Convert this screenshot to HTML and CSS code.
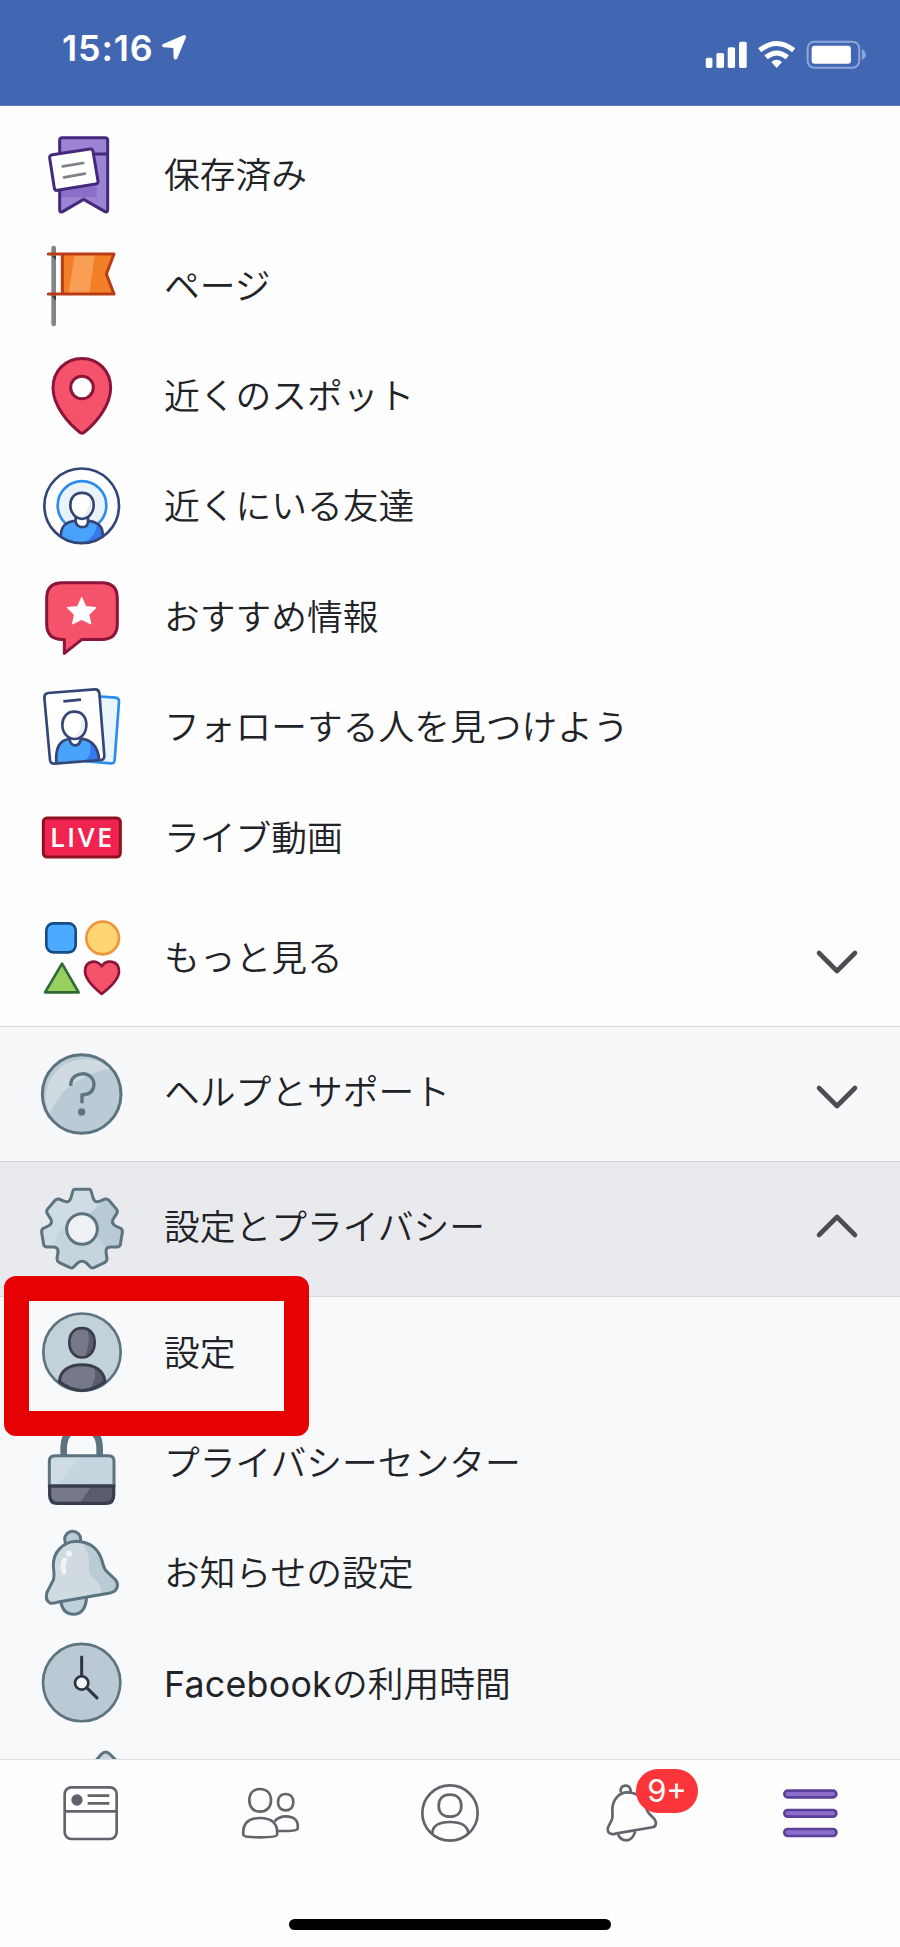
FILE: index.html
```html
<!DOCTYPE html>
<html lang="ja">
<head>
<meta charset="utf-8">
<title>メニュー</title>
<link rel="stylesheet" href="styles.css">
</head>
<body>
<div class="screen">
  <header class="status">
    <span class="time">15:16</span>
    <svg class="arrow" viewBox="480 100 84 84"><path d="M488 134 L552 106 Q559 105 558 113 L532 176 Q526 184 521 175 L520 145 L491 143 Q483 139 488 134Z" fill="#fff"/></svg>
    <svg class="signals" viewBox="192 115 492 100">
      <g fill="#fff">
        <rect x="197" y="174" width="20" height="31" rx="5"/><rect x="229" y="160" width="23" height="45" rx="5"/><rect x="263" y="143" width="22" height="62" rx="5"/><rect x="297" y="126" width="23" height="79" rx="5"/>
        <path d="M394 187 Q410 174 426 187 L410 205Z"/>
      </g>
      <g fill="none" stroke="#fff" stroke-width="15"><path d="M359 152 Q410 111 461 152"/><path d="M378 173 Q410 147 442 173"/></g>
      <rect x="503" y="126" width="155" height="78" rx="20" fill="none" stroke="#8ea6dc" stroke-width="6"/>
      <rect x="515" y="138" width="118" height="54" rx="9" fill="#fff"/>
      <path d="M666 148 Q678 156 678 165 T666 181Z" fill="#8ea6dc"/>
    </svg>
  </header>

  <main class="content">
    <ul class="list">
      <li class="row">
        <svg class="icon" viewBox="18 27 276 276">
          <path d="M89 60 Q89 53 97 53 H225 Q233 53 233 60 V270 Q233 278 225 275 L161 238 L98 275 Q89 279 89 270Z" fill="#9c83d4"/>
          <path d="M91 214 L200 198 V232 H91Z" fill="#8a6fc8"/>
          <path d="M190 102 H233 M89 60 Q89 53 97 53 H225 Q233 53 233 60 V270 Q233 278 225 275 L161 238 L98 275 Q89 279 89 270Z" fill="none" stroke="#44297d" stroke-width="9" stroke-linejoin="round"/>
          <path d="M67 104 L180 87 Q188 86 189 94 L204 183 Q205 191 197 192 L82 211 Q74 212 73 204 L59 114 Q58 106 67 104Z" fill="#fff" stroke="#44297d" stroke-width="9"/>
          <path d="M98 139 L160 129 M102 172 L165 161" stroke="#7d8288" stroke-width="8" stroke-linecap="round"/>
        </svg>
        <span class="label">保存済み</span>
      </li>
      <li class="row">
        <svg class="icon" viewBox="18 358 276 276">
          <path d="M71 382 V610" stroke="#7f868c" stroke-width="14" stroke-linecap="round"/>
          <path d="M64 405 H78 V418Z M64 525 H78 V540Z" fill="#3c4043"/>
          <path d="M97 400 H254 L229 460 L254 520 H97Z" fill="#f47f29"/>
          <path d="M134 402 H194 L178 519 H115Z" fill="#f99f55"/>
          <path d="M97 400 V520 M55 400 H252 L229 460 L252 520 H55" fill="none" stroke="#b93a17" stroke-width="9" stroke-linecap="round" stroke-linejoin="round"/>
        </svg>
        <span class="label">ページ</span>
      </li>
      <li class="row">
        <svg class="icon" viewBox="18 689.5 276 276">
          <path d="M156 715 C106 715 69 753 69 803 C69 858 116 910 150 937 Q156 941 162 937 C196 910 242 858 242 803 C242 753 205 715 156 715Z" fill="#f5526c" stroke="#8a1538" stroke-width="9"/>
          <circle cx="156" cy="802" r="34" fill="#fff" stroke="#8a1538" stroke-width="9"/>
        </svg>
        <span class="label">近くのスポット</span>
      </li>
      <li class="row">
        <svg class="icon" viewBox="18 30.6 276 276">
          <circle cx="155" cy="168" r="112" fill="#fff"/>
          <circle cx="156" cy="167" r="73" fill="#ebf3fa" stroke="#2d8ded" stroke-width="8"/>
          <path d="M93 260 C92 230 108 214 138 213 V205 H174 V213 C204 215 220 232 218 260 Q156 300 93 260Z" fill="#4aa3fa"/>
          <path d="M202 220 Q220 232 218 258 Q190 280 160 279 Q198 262 202 220Z" fill="#3679ee"/>
          <path d="M137 200 V216 Q140 231 156 232 T174 216 V200Z" fill="#fff" stroke="#344678" stroke-width="8"/>
          <path d="M93 258 C92 230 108 214 138 213 M174 213 C204 215 220 232 218 258" fill="none" stroke="#344678" stroke-width="8"/>
          <path d="M156 129 C179 129 191 145 191 166 C191 190 175 207 156 207 S121 190 121 166 C121 145 133 129 156 129Z" fill="#fff" stroke="#344678" stroke-width="8"/>
          <path d="M178 142 Q190 160 181 182 Q172 200 156 202 Q180 180 178 142Z" fill="#e9edf1"/>
          <circle cx="155" cy="168" r="112" fill="none" stroke="#344678" stroke-width="8"/>
        </svg>
        <span class="label">近くにいる友達</span>
      </li>
      <li class="row">
        <svg class="icon" viewBox="18 361.8 276 276">
          <path d="M97 397 H215 Q262 397 262 444 V520 Q262 567 215 567 H156 L103 609 V567 H97 Q50 567 50 520 V444 Q50 397 97 397Z" fill="#f5526c" stroke="#8a1538" stroke-width="9" stroke-linejoin="round"/>
          <path d="M155 442 L167 469 L197 472 L176 492 L182 520 L155 506 L128 520 L134 492 L113 472 L143 469Z" fill="#fff" stroke="#fff" stroke-width="4" stroke-linejoin="round"/>
        </svg>
        <span class="label">おすすめ情報</span>
      </li>
      <li class="row">
        <svg class="icon" viewBox="18 693 276 276">
          <path d="M190 738 L257 743 Q268 744 267 755 L254 930 Q253 941 242 940 L170 934Z" fill="#eaf4fb" stroke="#2d8ded" stroke-width="8"/>
          <path d="M54 729 L194 718 Q206 717 208 729 L223 917 Q223 929 212 930 L73 941 Q61 941 60 930 L43 742 Q43 731 54 729Z" fill="#fff"/>
          <path d="M79 937 C76 896 86 870 119 865 H147 C182 870 204 880 208 929Z" fill="#4aa3fa"/>
          <path d="M180 878 Q203 888 207 929 L165 933 Q187 915 180 878Z" fill="#3679ee"/>
          <path d="M79 937 C76 896 86 870 119 867 M149 866 C182 868 204 885 207 929" fill="none" stroke="#344678" stroke-width="8"/>
          <path d="M119 858 V870 Q123 886 136 886 T152 868 V858Z" fill="#fff" stroke="#344678" stroke-width="8"/>
          <path d="M133 785 C156 785 169 801 169 824 C169 850 153 867 134 867 S97 850 97 824 C97 803 110 785 133 785Z" fill="#fff" stroke="#344678" stroke-width="8"/>
          <path d="M155 799 Q169 819 159 843 Q150 861 134 862 Q158 840 155 799Z" fill="#e9edf1"/>
          <path d="M100 754 L153 749 M54 729 L194 718 Q206 717 208 729 L223 917 Q223 929 212 930 L73 941 Q61 941 60 930 L43 742 Q43 731 54 729Z" fill="none" stroke="#344678" stroke-width="8"/>
        </svg>
        <span class="label">フォローする人を見つけよう</span>
      </li>
      <li class="row">
        <svg class="icon" viewBox="18 4.2 276 276">
          <rect x="40" y="82" width="231" height="117" rx="11" fill="#f0244f" stroke="#8f1220" stroke-width="9"/>
          <text class="live" x="60" y="170" textLength="186" lengthAdjust="spacing">LIVE</text>
        </svg>
        <span class="label">ライブ動画</span>
      </li>
      <li class="row row-more">
        <svg class="icon" viewBox="18 370 276 276">
          <rect x="49" y="401" width="88" height="87" rx="21" fill="#4cabff" stroke="#174d87" stroke-width="8"/>
          <circle cx="218" cy="445" r="49" fill="#ffd573" stroke="#ee973e" stroke-width="8"/>
          <path d="M96 522 L146 608 H45Z" fill="#97cf61" stroke="#2f6b37" stroke-width="8" stroke-linejoin="round"/>
          <path d="M215 613 C195 597 165 572 165 545 C165 511 202 508 215 530 C229 508 267 511 267 545 C267 572 236 597 215 613Z" fill="#f5526c" stroke="#8a1538" stroke-width="8" stroke-linejoin="round"/>
        </svg>
        <span class="label raised">もっと見る</span>
        <svg class="chevron" viewBox="0 0 44 26"><path d="M4 4 L22 22 L40 4"/></svg>
      </li>
    </ul>

    <div class="row group">
      <svg class="icon" viewBox="18 774 276 276">
        <circle cx="155" cy="912" r="118" fill="#bacbd5"/>
        <path d="M58 975 A118 118 0 0 1 242 836 C215 838 190 848 150 868 Q85 905 58 975Z" fill="#cfdae1"/>
        <circle cx="155" cy="912" r="118" fill="none" stroke="#5b747f" stroke-width="9"/>
        <path d="M122 887 C122 840 192 840 192 884 Q190 914 156 915 V940" fill="none" stroke="#5b747f" stroke-width="10"/>
        <circle cx="155" cy="966" r="11" fill="#5b747f"/>
      </svg>
      <span class="label raised">ヘルプとサポート</span>
      <svg class="chevron low" viewBox="0 0 44 26"><path d="M4 4 L22 22 L40 4"/></svg>
    </div>

    <div class="row group open">
      <svg class="icon" viewBox="108 99 276 276">
        <path d="M224 118 H267 Q272 118 274 125 L280 146 Q286 160 300 153 L315 147 Q322 146 328 152 L350 178 Q354 184 350 191 L339 208 Q334 222 347 228 L362 235 Q368 239 367 247 L361 284 Q359 291 351 291 L331 291 Q317 292 318 306 L321 326 Q321 333 315 337 L282 353 Q274 356 270 350 L259 339 Q246 329 233 339 L222 350 Q218 356 210 353 L177 337 Q171 333 171 326 L174 306 Q175 292 161 291 L141 291 Q133 291 131 284 L125 247 Q124 239 130 235 L145 228 Q158 222 153 208 L142 191 Q138 184 142 178 L164 152 Q170 146 177 147 L192 153 Q206 160 212 146 L218 125 Q220 118 224 118Z" fill="#c5d4dd"/>
        <path d="M224 118 H267 L280 148 L300 153 L280 185 Q160 220 165 290 L131 284 L125 240 L155 220 L140 184 L170 147 L208 153Z" fill="#cfdce3"/>
        <path d="M271 190 L315 149 L350 185 L337 216 L366 240 L358 291 L318 294 Q305 270 290 262 Q302 220 271 190Z" fill="#b7cad5"/>
        <path d="M224 118 H267 Q272 118 274 125 L280 146 Q286 160 300 153 L315 147 Q322 146 328 152 L350 178 Q354 184 350 191 L339 208 Q334 222 347 228 L362 235 Q368 239 367 247 L361 284 Q359 291 351 291 L331 291 Q317 292 318 306 L321 326 Q321 333 315 337 L282 353 Q274 356 270 350 L259 339 Q246 329 233 339 L222 350 Q218 356 210 353 L177 337 Q171 333 171 326 L174 306 Q175 292 161 291 L141 291 Q133 291 131 284 L125 247 Q124 239 130 235 L145 228 Q158 222 153 208 L142 191 Q138 184 142 178 L164 152 Q170 146 177 147 L192 153 Q206 160 212 146 L218 125 Q220 118 224 118Z" fill="none" stroke="#5b747f" stroke-width="9"/>
        <circle cx="246" cy="237" r="46" fill="#f0f1f5" stroke="#5b747f" stroke-width="9"/>
      </svg>
      <span class="label raised">設定とプライバシー</span>
      <svg class="chevron up" viewBox="0 0 44 26"><path d="M4 22 L22 4 L40 22"/></svg>
    </div>

    <ul class="list sub">
      <li class="row">
        <svg class="icon" viewBox="108 468.6 276 276">
          <circle cx="246" cy="607" r="116" fill="#c3d1d9" stroke="#5b747f" stroke-width="8"/>
          <path d="M178 698 C180 660 210 645 246 645 S312 660 316 698 Q246 748 178 698Z" fill="#777988"/>
          <path d="M282 652 Q312 665 315 697 Q295 714 265 720 Q295 690 282 652Z" fill="#5a5c6b"/>
          <path d="M178 696 C180 660 210 645 246 645 S312 660 315 696 Q246 748 178 696Z" fill="none" stroke="#373e4d" stroke-width="9"/>
          <path d="M246 535 C270 535 284 552 284 578 C284 605 268 623 246 623 S208 605 208 578 C208 552 222 535 246 535Z" fill="#777988"/>
          <path d="M262 538 Q284 550 284 578 Q282 612 254 622 Q274 575 262 538Z" fill="#5a5c6b"/>
          <path d="M246 535 C270 535 284 552 284 578 C284 605 268 623 246 623 S208 605 208 578 C208 552 222 535 246 535Z" fill="none" stroke="#373e4d" stroke-width="8"/>
        </svg>
        <span class="label">設定</span>
      </li>
      <li class="row">
        <svg class="icon" viewBox="108 -10.2 276 276">
          <path d="M191 108 V85 C191 50 205 25 245 25 S299 50 299 85 V108" fill="none" stroke="#5b747f" stroke-width="20"/>
          <path d="M165 106 H326 Q342 106 342 122 V196 H148 V122 Q148 106 165 106Z" fill="#c5d4dd"/>
          <path d="M150 116 L240 110 L170 196 H150Z" fill="#cfdce3"/>
          <path d="M165 106 H326 Q342 106 342 122 V196 H148 V122 Q148 106 165 106Z" fill="none" stroke="#5b747f" stroke-width="9"/>
          <path d="M149 197 H341 V224 Q341 249 318 249 H172 Q149 249 149 224Z" fill="#5a5c6b"/>
          <path d="M152 200 H273 L240 247 H170 Q152 240 152 220Z" fill="#777988"/>
          <path d="M149 197 H341 V224 Q341 249 318 249 H172 Q149 249 149 224Z" fill="none" stroke="#373e4d" stroke-width="10"/>
        </svg>
        <span class="label">プライバシーセンター</span>
      </li>
      <li class="row">
        <svg class="icon" viewBox="108 321 276 276">
          <circle cx="218" cy="358" r="24" fill="#b9cbd6" stroke="#5b747f" stroke-width="9"/>
          <path d="M182 540 Q186 582 221 583 Q257 582 260 530Z" fill="#bed0da" stroke="#5b747f" stroke-width="9"/>
          <path d="M150 549 Q134 540 141 517 L160 480 Q164 470 160 440 C158 395 190 366 228 364 C265 365 295 382 307 425 Q312 448 321 455 L347 480 Q358 495 347 510 Q342 516 330 519 L171 547 Q158 551 150 549Z" fill="#cfdae1"/>
          <path d="M244 368 C282 374 298 395 307 425 Q312 448 321 455 L347 480 Q355 495 347 510 L305 521 Q305 490 280 474 Q265 465 267 440 Q270 390 244 368Z" fill="#b9cbd5"/>
          <path d="M150 549 Q134 540 141 517 L160 480 Q164 470 160 440 C158 395 190 366 228 364 C265 365 295 382 307 425 Q312 448 321 455 L347 480 Q358 495 347 510 Q342 516 330 519 L171 547 Q158 551 150 549Z" fill="none" stroke="#5b747f" stroke-width="9"/>
          <circle cx="207" cy="401" r="9" fill="#f0f4f6"/><path d="M194 420 Q185 437 192 455" fill="none" stroke="#f0f4f6" stroke-width="15" stroke-linecap="round"/>
        </svg>
        <span class="label">お知らせの設定</span>
      </li>
      <li class="row">
        <svg class="icon" viewBox="108 652.2 276 276">
          <circle cx="245" cy="789" r="116" fill="#bac9d3" stroke="#5b747f" stroke-width="8"/>
          <path d="M245 712 V770 M260 804 L291 835" stroke="#2c3343" stroke-width="9" stroke-linecap="round"/>
          <circle cx="245" cy="790" r="20" fill="#f3f5f7" stroke="#2c3343" stroke-width="8"/>
        </svg>
        <span class="label"><span class="latin">Facebook</span>の利用時間</span>
      </li>
      <li class="row">
        <svg class="icon" viewBox="108 983.4 276 276"><path d="M245 1070 L304 1002 Q317 989 330 1002 L350 1022 L285 1120Z" fill="#c5d4dd" stroke="#5b747f" stroke-width="9"/></svg>
      </li>
    </ul>
    <div class="highlight"></div>
  </main>

  <footer class="tabbar">
    <nav class="tabs">
      <a class="tab"><svg class="tab-icon" viewBox="174 121 192 192"><g fill="none" stroke="#63646c" stroke-width="8"><rect x="194" y="140" width="156" height="155" rx="20"/><path d="M194 212 H350 M263 165 H328 M263 188 H328"/></g><circle cx="231" cy="178" r="17" fill="#63606e"/></svg></a>
      <a class="tab"><svg class="tab-icon" viewBox="714 121 192 192"><g fill="none" stroke="#63646c" stroke-width="8"><path d="M780 145 C802 145 813 160 813 179 C813 201 798 213 780 213 S748 201 748 179 C748 160 758 145 780 145Z"/><path d="M857 160 C872 160 880 171 880 185 C880 200 870 209 857 209 S834 200 834 185 C834 171 842 160 857 160Z"/><path d="M730 283 C727 249 744 232 780 232 S835 249 831 283 Q829 290 780 290 T730 283Z"/><path d="M824 242 Q836 227 857 227 C884 227 896 241 893 264 Q890 272 834 271"/></g></svg></a>
      <a class="tab"><svg class="tab-icon" viewBox="-96 121 192 192"><g fill="none" stroke="#63646c" stroke-width="8"><circle cx="0" cy="217" r="83"/><path d="M0 162 C22 162 34 175 34 195 C34 217 20 228 0 228 S-34 217 -34 195 C-34 175 -22 162 0 162Z"/><path d="M-53 278 Q-52 244 0 244 T55 278"/></g></svg></a>
      <a class="tab"><svg class="tab-icon" viewBox="444 121 192 192"><g fill="none" stroke="#63646c" stroke-width="8"><path d="M512 155 Q510 136 526 135 T542 154 M504 281 Q511 299 529 299 T556 272"/><path d="M486 280 Q470 278 474 260 L485 238 Q489 230 487 211 C486 176 508 155 532 155 C566 155 579 175 587 197 Q590 213 602 224 L614 236 Q623 252 611 259 L496 279 Q490 281 486 280Z"/></g></svg><span class="badge">9+</span></a>
      <a class="tab"><svg class="tab-icon" viewBox="984 121 192 192"><g fill="#8d6fc9" stroke="#59409a" stroke-width="8"><rect x="1003" y="150" width="156" height="20" rx="10"/><rect x="1003" y="208" width="156" height="20" rx="10"/><rect x="1003" y="265" width="156" height="21" rx="10"/></g></svg></a>
    </nav>
    <div class="home-bar"></div>
  </footer>
</div>
</body>
</html>
```
FILE: styles.css
```css
* { box-sizing: border-box; }
body {
  margin: 0;
  background: #fefefe;
  color: #222327;
  font-family: Inter, "Noto Sans CJK JP", sans-serif;
}
.screen {
  display: flex;
  flex-direction: column;
  width: 900px;
  height: 1947px;
  overflow: hidden;
}
.status {
  display: flex;
  flex: none;
  height: 106px;
  padding: 0 32px 0 62px;
  background: #4267b2;
  border-bottom: 1px solid #5d78bd;
}
.time {
  width: 98px;
  margin-top: 26px;
  color: #fff;
  font-size: 35.8px;
  font-weight: 600;
  line-height: 44px;
  letter-spacing: 0.9px;
}
.arrow { width: 28px; height: 28px; margin-top: 33px; }
.signals { width: 164px; height: 33.3px; margin: 38.3px 0 0 auto; }
.content {
  position: relative;
  height: 1654px;
  overflow: hidden;
  border-bottom: 1px solid #dcdfe3;
}
.list { margin: 0; padding: 14px 0 0; list-style: none; }
.row {
  display: flex;
  align-items: center;
  height: 110.4px;
  padding: 0 41px 0 36px;
}
.row-more { height: 133.2px; }
.icon { flex: none; width: 92px; height: 92px; }
.label {
  margin: 0 0 0 36px;
  font-size: 35.75px;
  font-weight: 350;
  line-height: 50px;
  white-space: nowrap;
}
.raised { margin-top: -3px; }
.sub .label { margin-top: 1px; }
.latin { font-weight: 400; letter-spacing: 0.25px; }
.chevron {
  width: 44px;
  height: 26px;
  margin: 6px 0 0 auto;
  fill: none;
  stroke: #4c4d52;
  stroke-width: 4.6;
  stroke-linecap: round;
  stroke-linejoin: round;
}
.chevron.low { margin-top: 7px; }
.chevron.up { margin-top: -6px; }
.group {
  height: 135px;
  background: #f7f8fa;
  border-top: 1px solid #d7d9dd;
}
.group.open { background: #e9eaee; border-color: #d3d6dd; }
.sub {
  height: 470px;
  padding-top: 0;
  background: #f7f9fb;
  border-top: 1px solid #d7d9dd;
}
.highlight {
  position: absolute;
  left: 4px;
  top: 1170px;
  width: 305px;
  height: 160px;
  border: 25px solid #e60202;
  border-radius: 12px;
}
.live {
  fill: #fff;
  font-family: "Open Sans", sans-serif;
  font-size: 81px;
  font-weight: 600;
}
.tabbar {
  display: flex;
  flex: 1;
  flex-direction: column;
  align-items: center;
  background: #fefefe;
}
.tabs { display: grid; grid-template-columns: repeat(5, 180px); margin-top: 20.6px; }
.tab { position: relative; display: flex; justify-content: center; }
.tab-icon { width: 64px; height: 64px; }
.badge {
  position: absolute;
  left: 96px;
  top: -11.5px;
  width: 62px;
  height: 44px;
  border-radius: 22px;
  background: #fb3539;
  color: #fff;
  font-size: 31px;
  font-weight: 400;
  line-height: 44px;
  text-align: center;
}
.home-bar {
  width: 322px;
  height: 11px;
  margin-top: 74.4px;
  border-radius: 6px;
  background: #000;
}
```
